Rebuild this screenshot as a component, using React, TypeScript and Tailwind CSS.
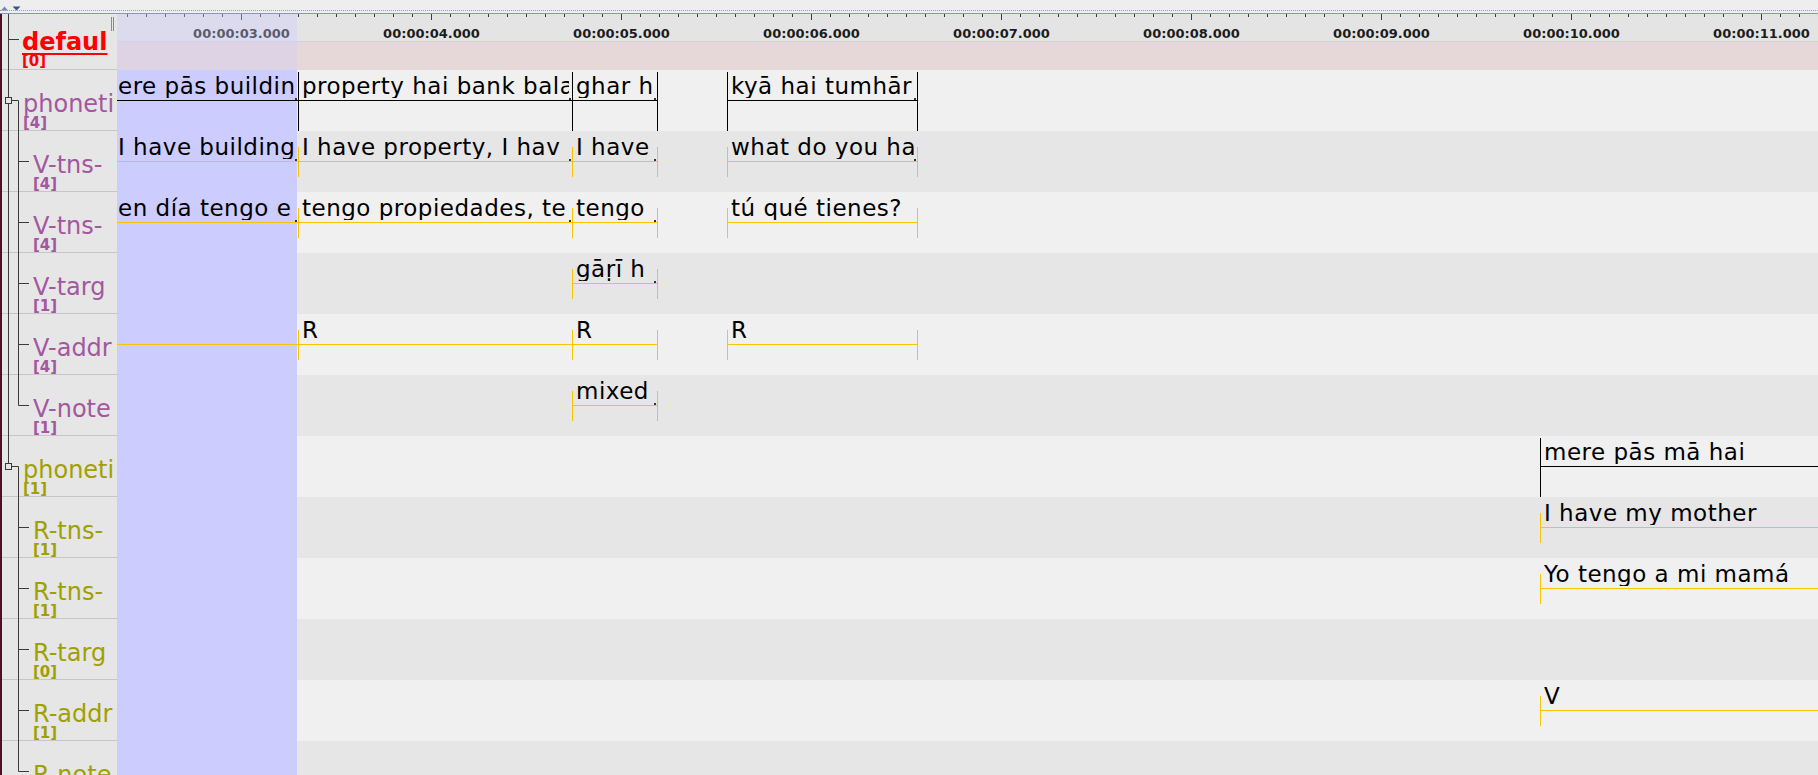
import React from 'react';

type Seg = { s: number; e: number; text?: string; dot?: boolean; tx?: number };
type Tier = { name: string; count: string; color: string; parent?: boolean; segs: Seg[] };

const VCOL = 'text-[#a3579f]';
const RCOL = 'text-[#a0a000]';

// positions on the time axis, in px from the left edge of the data area
const A = { s: -100, e: 181, tx: 101 };
const B = { s: 181, e: 455 };
const C = { s: 455, e: 540 };
const D = { s: 610, e: 800 };
const E = { s: 1423, e: 1800 };

const tiers: Tier[] = [
  {
    name: 'phoneti', count: '[4]', color: VCOL, parent: true, segs: [
      { ...A, text: 'ere pās buildin', dot: true },
      { ...B, text: 'property hai bank bala', dot: true },
      { ...C, text: 'ghar h', dot: true },
      { ...D, text: 'kyā hai tumhār', dot: true },
    ],
  },
  {
    name: 'V-tns-', count: '[4]', color: VCOL, segs: [
      { ...A, text: 'I have building', dot: true },
      { ...B, text: 'I have property, I hav', dot: true },
      { ...C, text: 'I have', dot: true },
      { ...D, text: 'what do you ha', dot: true },
    ],
  },
  {
    name: 'V-tns-', count: '[4]', color: VCOL, segs: [
      { ...A, text: 'en día tengo e', dot: true },
      { ...B, text: 'tengo propiedades, te', dot: true },
      { ...C, text: 'tengo', dot: true },
      { ...D, text: 'tú qué tienes?' },
    ],
  },
  { name: 'V-targ', count: '[1]', color: VCOL, segs: [{ ...C, text: 'gāṛī h', dot: true }] },
  {
    name: 'V-addr', count: '[4]', color: VCOL, segs: [
      { ...A },
      { ...B, text: 'R' },
      { ...C, text: 'R' },
      { ...D, text: 'R' },
    ],
  },
  { name: 'V-note', count: '[1]', color: VCOL, segs: [{ ...C, text: 'mixed', dot: true }] },
  { name: 'phoneti', count: '[1]', color: RCOL, parent: true, segs: [{ ...E, text: 'mere pās mā hai' }] },
  { name: 'R-tns-', count: '[1]', color: RCOL, segs: [{ ...E, text: 'I have my mother' }] },
  { name: 'R-tns-', count: '[1]', color: RCOL, segs: [{ ...E, text: 'Yo tengo a mi mamá' }] },
  { name: 'R-targ', count: '[0]', color: RCOL, segs: [] },
  { name: 'R-addr', count: '[1]', color: RCOL, segs: [{ ...E, text: 'V' }] },
  { name: 'R-note', count: '[0]', color: RCOL, segs: [] },
];

const ticks = Array.from({ length: 90 }, (_, k) => k);
const seconds = [3, 4, 5, 6, 7, 8, 9, 10, 11];

function Annotation({ seg, parent }: { seg: Seg; parent?: boolean }) {
  const w = seg.e - seg.s + 1;
  const line = parent ? 'bg-black' : 'bg-[#f7c600]';
  return (
    <div className="absolute top-0 h-full" style={{ left: seg.s, width: w }}>
      <div className={`absolute left-0 right-0 top-[30px] h-px ${line}`} />
      {parent ? (
        <>
          <div className="absolute left-0 top-[2px] bottom-0 w-px bg-black" />
          <div className="absolute right-0 top-[2px] bottom-0 w-px bg-black" />
        </>
      ) : (
        <>
          <div className="absolute left-0 top-[16px] h-[30px] w-px bg-[#f7c600]" />
          <div className="absolute right-0 top-[16px] h-[30px] w-px bg-[#f7c600]" />
        </>
      )}
      {seg.text && (
        <div
          className="absolute top-[5px] overflow-hidden whitespace-nowrap text-[23px] leading-[23px] tracking-[0.5px] text-black"
          style={{ left: seg.tx ?? 4, width: w - (seg.tx ?? 4) - 4 }}
        >
          {seg.text}
        </div>
      )}
      {seg.dot && <div className="absolute right-[2px] top-[28px] h-[2px] w-[2px] bg-[#333]" />}
    </div>
  );
}

function TreeLines() {
  const vKids = [147.5, 208.5, 269.5, 330.5, 391.5];
  const rKids = [513.5, 574.5, 635.5, 696.5, 757.5];
  return (
    <svg className="pointer-events-none absolute left-0 top-0" width={115} height={761}>
      <g stroke="#3a3a3a" strokeWidth={1} fill="none">
        <line x1={6.5} y1={0} x2={6.5} y2={449.5} />
        <line x1={6.5} y1={25.5} x2={17} y2={25.5} />
        <line x1={9.5} y1={86.5} x2={16.5} y2={86.5} />
        <line x1={16.5} y1={86.5} x2={16.5} y2={391.5} />
        {vKids.map((y) => <line key={y} x1={16.5} y1={y} x2={27} y2={y} />)}
        <rect x={3.5} y={83.5} width={6} height={6} fill="#e6e6e6" />
        <line x1={9.5} y1={452.5} x2={16.5} y2={452.5} />
        <line x1={16.5} y1={452.5} x2={16.5} y2={757.5} />
        {rKids.map((y) => <line key={y} x1={16.5} y1={y} x2={27} y2={y} />)}
        <rect x={3.5} y={449.5} width={6} height={6} fill="#e6e6e6" />
      </g>
      <g stroke="#7c8ca4" strokeWidth={1}>
        <line x1={109.5} y1={3} x2={109.5} y2={17} />
        <line x1={111.5} y1={3} x2={111.5} y2={17} />
      </g>
    </svg>
  );
}

export default function App() {
  return (
    <div className="h-[775px] w-[1818px] overflow-hidden bg-[#eeeeee] font-['DejaVu_Sans',sans-serif]">
      {/* split pane divider */}
      <div className="relative h-[14px] bg-[#eeeeee]">
        <svg className="absolute left-0 top-[6px]" width={22} height={5}>
          <polygon points="1,4.5 4.5,0.5 8,4.5" fill="#6b88bb" />
          <polygon points="12.5,0.5 20.5,0.5 16.5,4.5" fill="#33558c" />
        </svg>
        <div className="absolute left-0 right-0 top-[10px] border-t border-dotted border-[#9c9c9c]" />
        <div className="absolute left-0 right-0 top-[13px] h-px bg-[#8898b4]" />
      </div>

      <div className="flex h-[761px]">
        <div className="w-[2px] shrink-0 bg-[#4a1028]" />

        {/* tier labels */}
        <div className="relative flex w-[115px] shrink-0 flex-col overflow-hidden bg-[#e6e6e6]">
          <div className="h-[56px] shrink-0 border-b border-[#c6c6c6] pl-[20px] pt-[16px]">
            <div className="text-[24px] font-bold leading-[24px] text-[#ff0000] underline decoration-[1.5px] underline-offset-[3px]">
              defaul
            </div>
            <div className="text-[15px] font-bold leading-[15px] text-[#ff0000]">[0]</div>
          </div>
          {tiers.map((t, i) => (
            <div
              key={i}
              className={`h-[61px] shrink-0 overflow-hidden border-b border-[#c6c6c6] pt-[22px] ${t.color} ${t.parent ? 'pl-[21px]' : 'pl-[31px]'}`}
            >
              <div className="whitespace-nowrap text-[24px] leading-[24px]">{t.name}</div>
              <div className="text-[15px] font-bold leading-[15px]">{t.count}</div>
            </div>
          ))}
          <TreeLines />
        </div>

        {/* timeline */}
        <div className="relative flex flex-1 flex-col overflow-hidden">
          <div className="relative h-[28px] shrink-0 border-b border-[#cfcfee] bg-[#e4e4e4]">
            <svg className="absolute left-0 top-0" width={1701} height={8}>
              {ticks.map((k) => {
                const x = 10 + k * 19 + 0.5;
                const major = k % 10 === 6;
                return <line key={k} x1={x} y1={0} x2={x} y2={major ? 6 : 3} stroke="#3c3c3c" strokeWidth={1} />;
              })}
            </svg>
            {seconds.map((s) => (
              <div
                key={s}
                className="absolute top-[13px] -translate-x-1/2 whitespace-nowrap text-[13px] font-bold leading-[13px] text-[#1c1c1c]"
                style={{ left: 124 + (s - 3) * 190 + 0.5 }}
              >
                00:00:{String(s).padStart(2, '0')}.000
              </div>
            ))}
            <div className="absolute left-0 top-0 h-full w-[180px] bg-[#ccccff]/35" />
          </div>
          <div className="relative h-[28px] shrink-0 bg-[#e6d8d8]">
            <div className="absolute left-0 top-0 h-full w-[180px] bg-[#ccccff]/35" />
          </div>
          {tiers.map((t, i) => (
            <div key={i} className={`relative h-[61px] shrink-0 ${i % 2 === 0 ? 'bg-[#f0f0f0]' : 'bg-[#e6e6e6]'}`}>
              <div className="absolute left-0 top-0 h-full w-[180px] bg-[#ccccff]" />
              {t.segs.map((seg, j) => (
                <Annotation key={j} seg={seg} parent={t.parent} />
              ))}
            </div>
          ))}
        </div>
      </div>
    </div>
  );
}
